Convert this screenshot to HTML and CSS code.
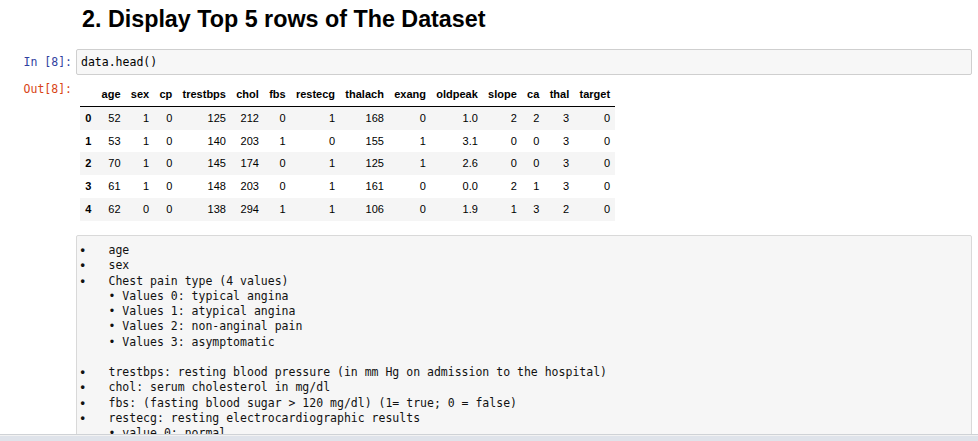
FILE: index.html
```html
<!DOCTYPE html>
<html>
<head>
<meta charset="utf-8">
<link rel="stylesheet" href="styles.css">
</head>
<body>
<div class="nb">
  <div class="cell md">
    <div class="prompt"></div>
    <h2 class="title">2. Display Top 5 rows of The Dataset</h2>
  </div>
  <div class="cell code">
    <div class="prompt in">In&nbsp;[8]:</div>
    <div class="input">data.head()</div>
  </div>
  <div class="cell out">
    <div class="prompt outp">Out[8]:</div>
    <div class="output">
      <table class="df">
        <thead>
          <tr><th></th><th>age</th><th>sex</th><th>cp</th><th>trestbps</th><th>chol</th><th>fbs</th><th>restecg</th><th>thalach</th><th>exang</th><th>oldpeak</th><th>slope</th><th>ca</th><th>thal</th><th>target</th></tr>
        </thead>
        <tbody>
          <tr><th>0</th><td>52</td><td>1</td><td>0</td><td>125</td><td>212</td><td>0</td><td>1</td><td>168</td><td>0</td><td>1.0</td><td>2</td><td>2</td><td>3</td><td>0</td></tr>
          <tr><th>1</th><td>53</td><td>1</td><td>0</td><td>140</td><td>203</td><td>1</td><td>0</td><td>155</td><td>1</td><td>3.1</td><td>0</td><td>0</td><td>3</td><td>0</td></tr>
          <tr><th>2</th><td>70</td><td>1</td><td>0</td><td>145</td><td>174</td><td>0</td><td>1</td><td>125</td><td>1</td><td>2.6</td><td>0</td><td>0</td><td>3</td><td>0</td></tr>
          <tr><th>3</th><td>61</td><td>1</td><td>0</td><td>148</td><td>203</td><td>0</td><td>1</td><td>161</td><td>0</td><td>0.0</td><td>2</td><td>1</td><td>3</td><td>0</td></tr>
          <tr><th>4</th><td>62</td><td>0</td><td>0</td><td>138</td><td>294</td><td>1</td><td>1</td><td>106</td><td>0</td><td>1.9</td><td>1</td><td>3</td><td>2</td><td>0</td></tr>
        </tbody>
      </table>
    </div>
  </div>
  <div class="cell raw">
    <div class="prompt"></div>
    <div class="rawbox">
      <div class="li"><span class="dot">•</span><span>age</span></div>
      <div class="li"><span class="dot">•</span><span>sex</span></div>
      <div class="li"><span class="dot">•</span><span>Chest pain type (4 values)</span></div>
      <div class="li sub"><span class="dot"></span><span>• Values 0: typical angina</span></div>
      <div class="li sub"><span class="dot"></span><span>• Values 1: atypical angina</span></div>
      <div class="li sub"><span class="dot"></span><span>• Values 2: non-anginal pain</span></div>
      <div class="li sub"><span class="dot"></span><span>• Values 3: asymptomatic</span></div>
      <div class="li blank"></div>
      <div class="li"><span class="dot">•</span><span>trestbps: resting blood pressure (in mm Hg on admission to the hospital)</span></div>
      <div class="li"><span class="dot">•</span><span>chol: serum cholesterol in mg/dl</span></div>
      <div class="li"><span class="dot">•</span><span>fbs: (fasting blood sugar &gt; 120 mg/dl) (1= true; 0 = false)</span></div>
      <div class="li"><span class="dot">•</span><span>restecg: resting electrocardiographic results</span></div>
      <div class="li sub"><span class="dot"></span><span>• value 0: normal</span></div>
    </div>
  </div>
</div>
<div class="statusbar"></div>
</body>
</html>
```

FILE: styles.css
```css
html, body {
  margin: 0;
  padding: 0;
  background: #ffffff;
  overflow: hidden;
  height: 441px;
}

.nb {
  width: 972px;
  font-family: "Liberation Sans", Arial, sans-serif;
  color: #000;
}

.cell {
  display: grid;
  grid-template-columns: 76px 896px;
}

.prompt {
  font-family: "DejaVu Sans Mono", monospace;
  font-size: 11.5px;
  line-height: 16px;
  text-align: right;
  padding-right: 4px;
}

.md {
  padding-top: 5px;
}

.title {
  margin: 0;
  padding-left: 6px;
  font-family: "Liberation Sans", Arial, sans-serif;
  font-size: 23.3px;
  font-weight: bold;
  line-height: 28px;
  color: #000;
}

.code {
  margin-top: 16px;
}

.in {
  color: #303F9F;
  padding-top: 5px;
}

.input {
  border: 1px solid #cfcfcf;
  background: #f7f7f7;
  border-radius: 2px;
  padding: 4px 4px;
  font-family: "DejaVu Sans Mono", monospace;
  font-size: 11.5px;
  line-height: 16px;
  color: #000;
}

.out {
  margin-top: 5px;
}

.outp {
  color: #D84315;
  padding-top: 1px;
}

.output {
  padding-top: 4px;
  padding-left: 4px;
}

.df {
  border-collapse: collapse;
  border-spacing: 0;
  font-family: "Liberation Sans", Arial, sans-serif;
  font-size: 11px;
  line-height: 12.75px;
  color: #000;
}

.df th, .df td {
  padding: 5px 5.15px;
  text-align: right;
  vertical-align: middle;
  white-space: nowrap;
}

.df thead th {
  font-weight: bold;
  padding-top: 4px;
  padding-bottom: 5px;
  border-bottom: 1px solid #000;
}

.df tbody th {
  font-weight: bold;
}

.df tbody tr:nth-child(odd) {
  background: #f5f5f5;
}

.raw {
  margin-top: 14px;
}

.rawbox {
  border: 1px solid #d9d9d9;
  background: #f6f6f6;
  border-radius: 2px;
  padding: 7.5px 10px 5px 0;
  font-family: "DejaVu Sans Mono", monospace;
  font-size: 11.5px;
  line-height: 15.25px;
  color: #111;
}

.li {
  display: flex;
  white-space: pre;
}

.blank {
  height: 15.25px;
}

.dot {
  width: 28px;
  padding-left: 3.5px;
  flex: none;
  font-family: "Liberation Sans", Arial, sans-serif;
  font-size: 12.5px;
  font-weight: bold;
}

.statusbar {
  position: fixed;
  left: 0;
  right: 0;
  bottom: 0;
  height: 6px;
  border-top: 1px solid #cfd2d6;
  background: #dfe3ea;
  box-shadow: inset 0 1px 0 #f2f2f2;
}
```
